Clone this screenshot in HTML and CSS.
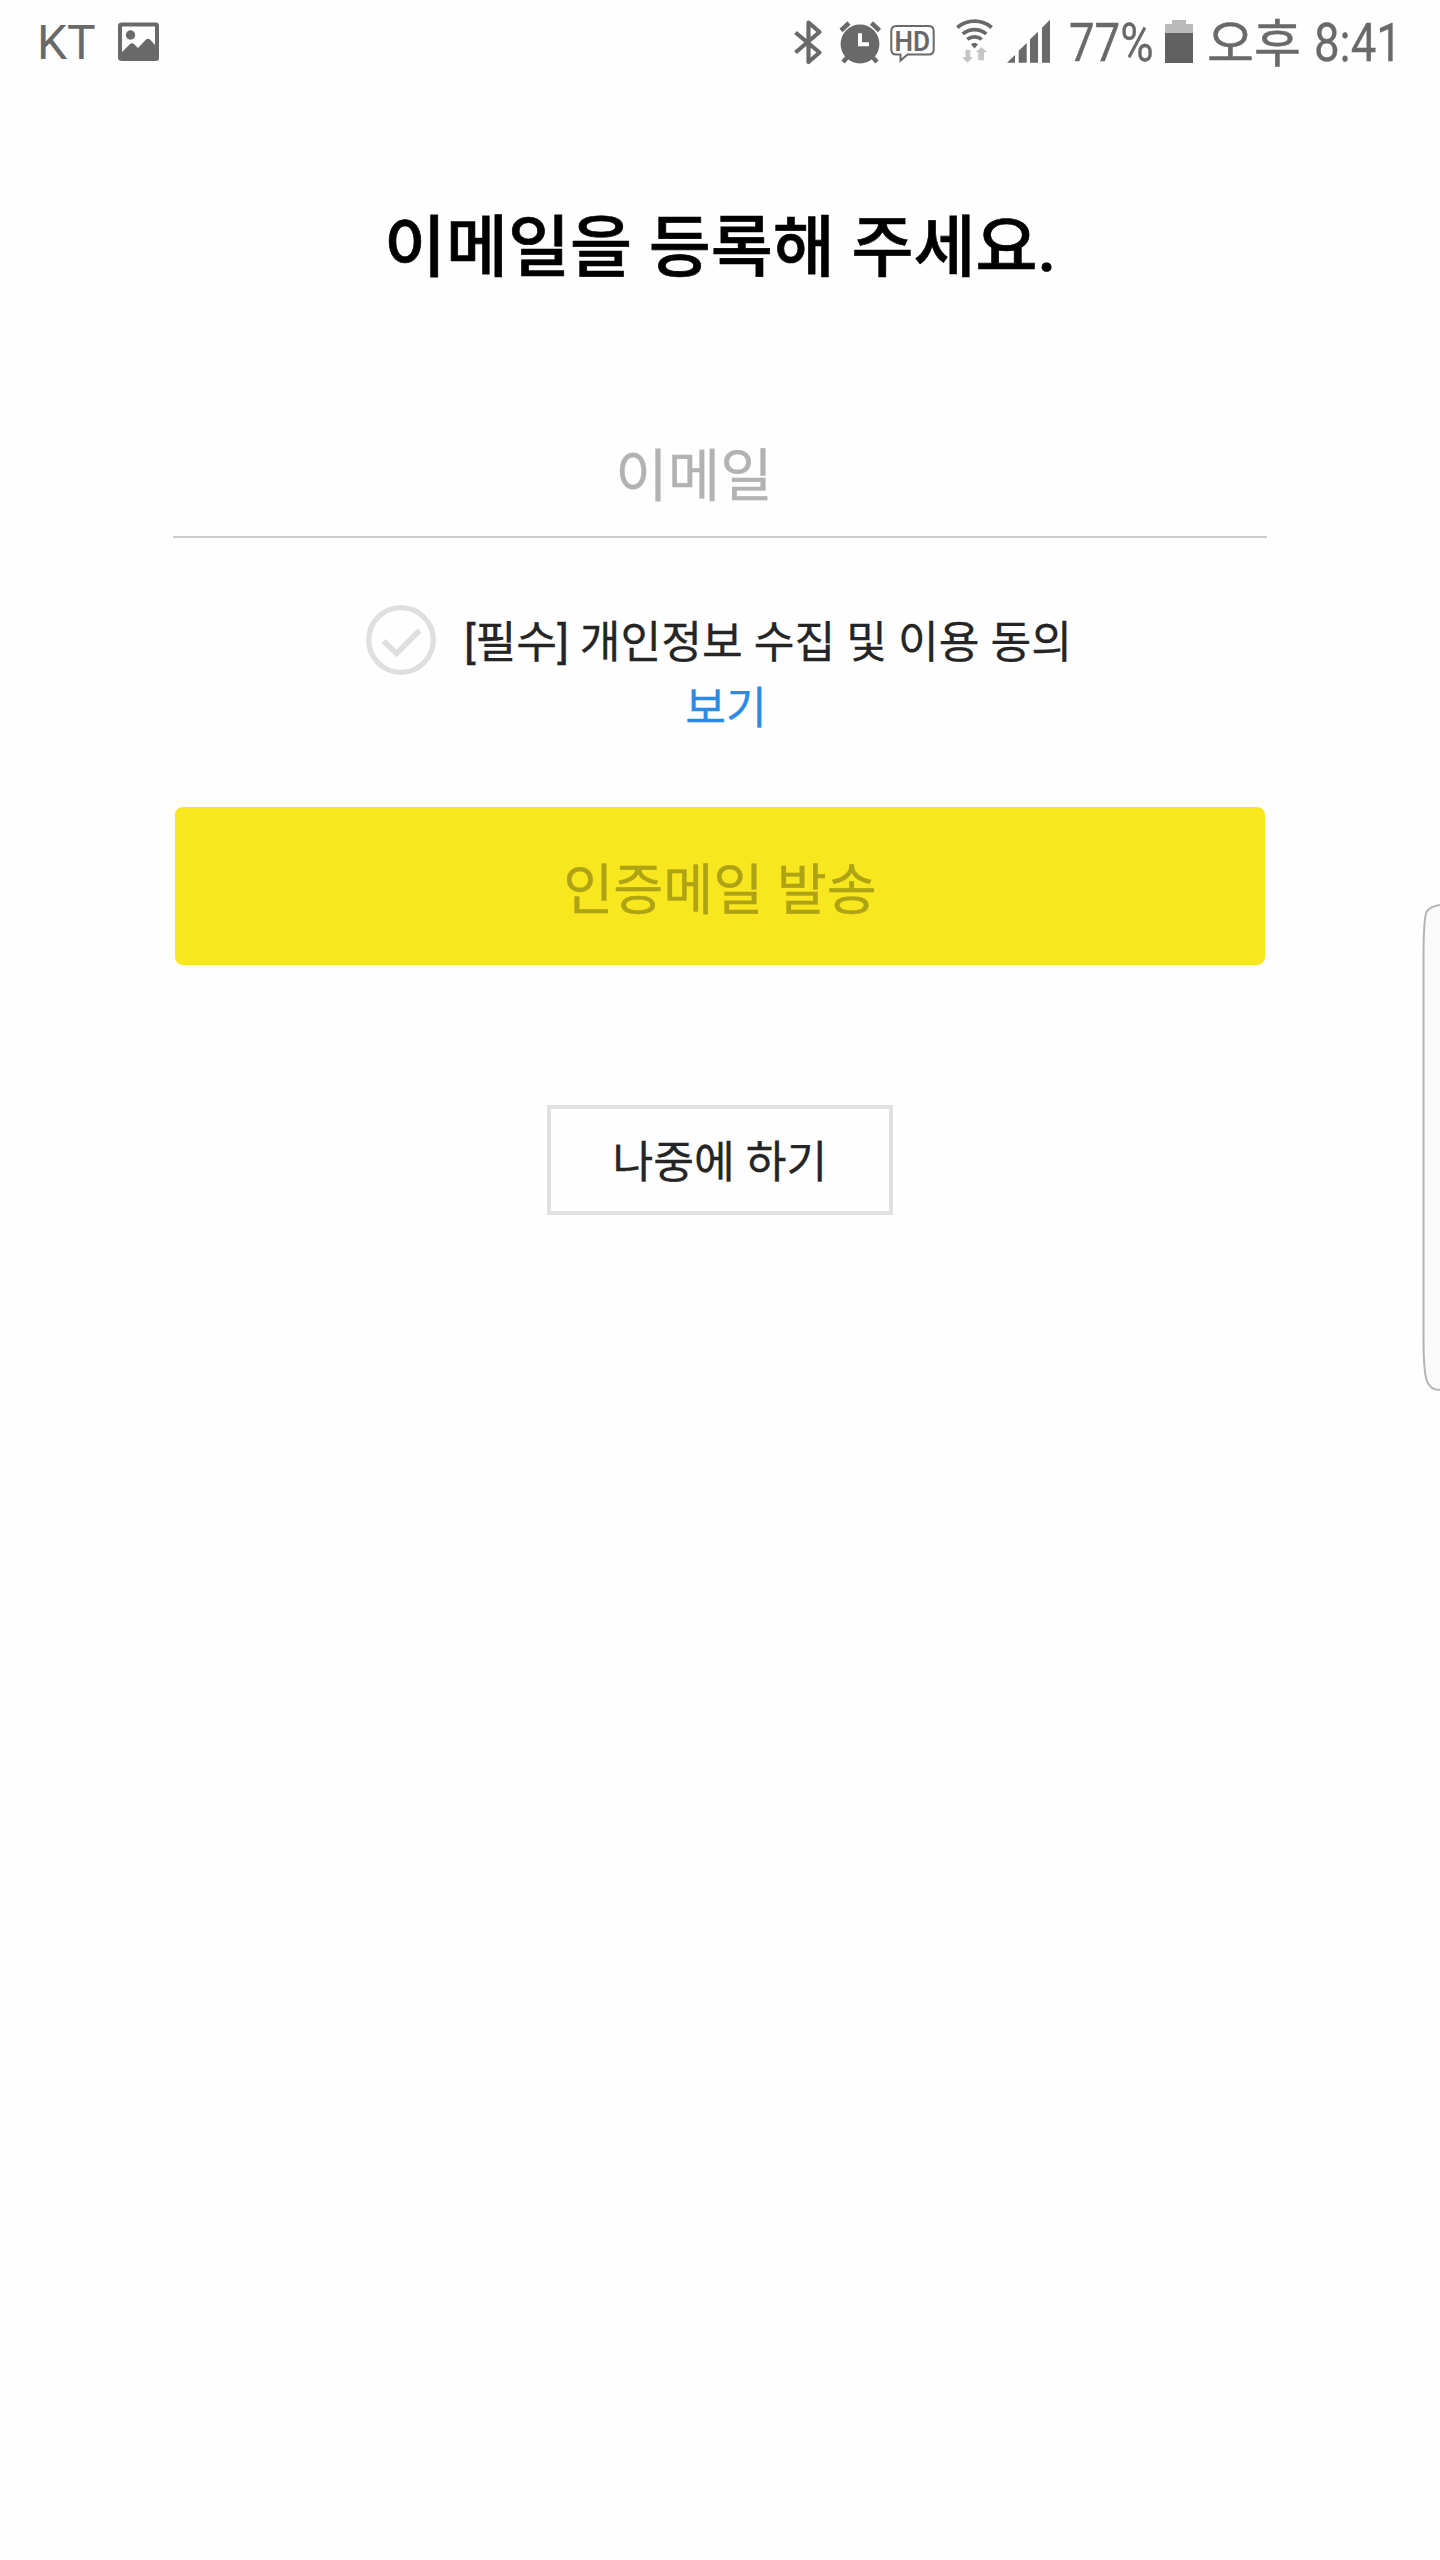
FILE: index.html
```html
<!DOCTYPE html>
<html lang="ko">
<head>
<meta charset="utf-8">
<title>이메일 등록</title>
<link rel="stylesheet" href="styles.css">
</head>
<body>
<header class="status">
  <div class="status-left">
    <span class="carrier">KT</span>
    <svg class="ic-photo" width="42" height="40" viewBox="0 0 42 40"><path fill="#696969" fill-rule="evenodd" d="M4 0.500H38Q41 0.500 41 3.500V36Q41 39 38 39H4Q0 39 0 36V3.500Q0 0.500 4 0.500ZM4 4.500V30L11.500 22.500Q14 20 16.500 22.500L20 26L27.500 18Q30 15.500 32.500 18L37 23V4.500Z"/><circle cx="12.500" cy="13" r="4.700" fill="#696969"/></svg>
  </div>
  <div class="status-right">
    <svg class="ic-status" width="280" height="54" viewBox="0 0 280 54" fill="#696969">
      <path d="M5.500 19.500 29.500 39.500 18.500 49V9.500L29.500 19 5.500 39.500" fill="none" stroke="#696969" stroke-width="4.200" stroke-linejoin="round"/>
      <circle cx="70" cy="31" r="19.400"/>
      <path d="M51 17.500 59 10M81.500 10 89.500 17.500M53 49 59 42.500M81 42.500 87 49" fill="none" stroke="#696969" stroke-width="4.500"/>
      <path d="M70 20.300V31.300H79" fill="none" stroke="#fefefe" stroke-width="4"/>
      <path d="M106.300 13H138.700Q143.700 13 143.700 18V36.500Q143.700 41.500 138.700 41.500H117.500L110.500 47.500V41.500H106.300Q101.300 41.500 101.300 36.500V18Q101.300 13 106.300 13Z" fill="none" stroke="#696969" stroke-width="2"/>
      <text class="hd" x="104.500" y="37.500" textLength="35.500" lengthAdjust="spacingAndGlyphs">HD</text>
      <path d="M167.300 14.500A26.700 26.700 0 0 1 201.700 14.500M172.700 20.800A18.500 18.500 0 0 1 196.300 20.800M177.300 26.400A11.200 11.200 0 0 1 191.700 26.400" fill="none" stroke="#696969" stroke-width="3.700"/>
      <path d="M181 31.500Q184.500 28 188 31.500L184.500 35.500Z"/>
      <path fill="#c5c5c5" d="M175.500 37H180.300V44.300H183L177.500 49.800 172 44.300H175.500ZM191.500 34 197.300 39.300H194V47.300H188.300V39.300H185.700Z"/>
      <path d="M217 49.700 225 42V49.700ZM228.700 49.700V37.700L236.700 30V49.700ZM240 49.700V26.300L248 18.700V49.700ZM252 49.700V14.700L260 6.700V49.700Z"/>
    </svg>
    <span class="num pct">77%</span>
    <svg class="ic-battery" width="28" height="43" viewBox="0 0 28 43"><path fill="#bababa" d="M7 0H21V4H28V13H0V4H7Z"/><path fill="#616161" d="M0 13H28V43H0Z"/></svg>
    <span class="ampm">오후</span>
    <span class="num clock">8:41</span>
  </div>
</header>
<main class="form">
  <h1 class="title">이메일을 등록해 주세요.</h1>
  <div class="field">이메일</div>
  <div class="consent">
    <svg width="70" height="71" viewBox="0 0 70 71" fill="none" stroke="#dfdfdf"><circle cx="35" cy="35" r="32.300" stroke-width="5.200"/><path d="M17.500 36 30.500 48.500 53.500 25.500" stroke-width="5.500"/></svg>
    <span>[필수] 개인정보 수집 및 이용 동의</span>
  </div>
  <a class="view">보기</a>
  <button class="send">인증메일 발송</button>
  <button class="later">나중에 하기</button>
</main>
<svg class="edge" width="20" height="490" viewBox="0 0 20 490"><path d="M20 2C12 3 9 5 6.500 9C4.500 14 3.500 32 3.500 56V434C3.500 458 4.500 472 7 478C9 484 13 487 20 487" fill="#fafafa" stroke="#b4b4b4" stroke-width="2"/></svg>
</body>
</html>
```
FILE: styles.css
```css
body {
  margin: 0;
  width: 1440px;
  height: 2560px;
  position: relative;
  overflow: hidden;
  background: #fefefe;
  font-family: Roboto, "Noto Sans CJK KR", sans-serif;
  color: #252525;
  -webkit-text-stroke: .3px;
}
.status {
  display: flex;
  justify-content: space-between;
  height: 84px;
  color: #696969;
  -webkit-text-stroke: 0;
}
.status-left {
  display: flex;
  padding-left: 37px;
}
.carrier {
  font: 400 48px/85px Roboto, sans-serif;
  width: 81px;
}
.ic-photo { margin-top: 22px; }
.status-right {
  display: flex;
  width: 650px;
}
.status-right > svg { flex: none; }
.ic-status { margin-top: 13px; }
.hd { font: 600 27px Roboto, sans-serif; }
.num {
  font: 400 53px/87px Roboto, sans-serif;
  transform: scaleX(.86);
  transform-origin: 0 0;
  white-space: nowrap;
  flex: none;
  -webkit-text-stroke: .3px;
}
.pct { width: 96px; margin-left: -1px; }
.ic-battery { margin-top: 20px; }
.ampm {
  font-size: 51px;
  line-height: 90px;
  width: 107px;
  margin-left: 14px;
  -webkit-text-stroke: .5px;
}
.form {
  display: flex;
  flex-direction: column;
  align-items: center;
}
.title {
  margin: 114px 0 0;
  font-size: 67.4px;
  line-height: 100px;
  font-weight: 500;
  color: #000;
  -webkit-text-stroke: .7px;
}
.field {
  box-sizing: border-box;
  width: 1094px;
  height: 132px;
  margin-top: 108px;
  padding-right: 52px;
  border-bottom: 2px solid #ccc;
  font-size: 57px;
  line-height: 141px;
  text-align: center;
  color: #b2b2b2;
}
.consent {
  display: flex;
  gap: 28px;
  height: 68px;
  margin-top: 67px;
  padding-right: 2px;
  font-size: 44.3px;
  line-height: 76px;
}
.view {
  height: 66px;
  font-size: 44.3px;
  line-height: 72px;
  padding-left: 12px;
  color: #2a8be4;
}
.send, .later {
  box-sizing: border-box;
  padding: 0 0 2px;
  font-family: inherit;
  -webkit-text-stroke: .3px;
}
.send {
  width: 1090px;
  height: 158px;
  margin-top: 68px;
  border: 0;
  border-radius: 8px;
  background: #f8e71e;
  color: #aea215;
  font-size: 54.4px;
}
.later {
  width: 346px;
  height: 110px;
  margin-top: 140px;
  border: 4px solid #e0e0e0;
  background: #fefefe;
  color: #252525;
  font-size: 44.3px;
}
.edge {
  position: absolute;
  right: 0;
  top: 903px;
}
```
